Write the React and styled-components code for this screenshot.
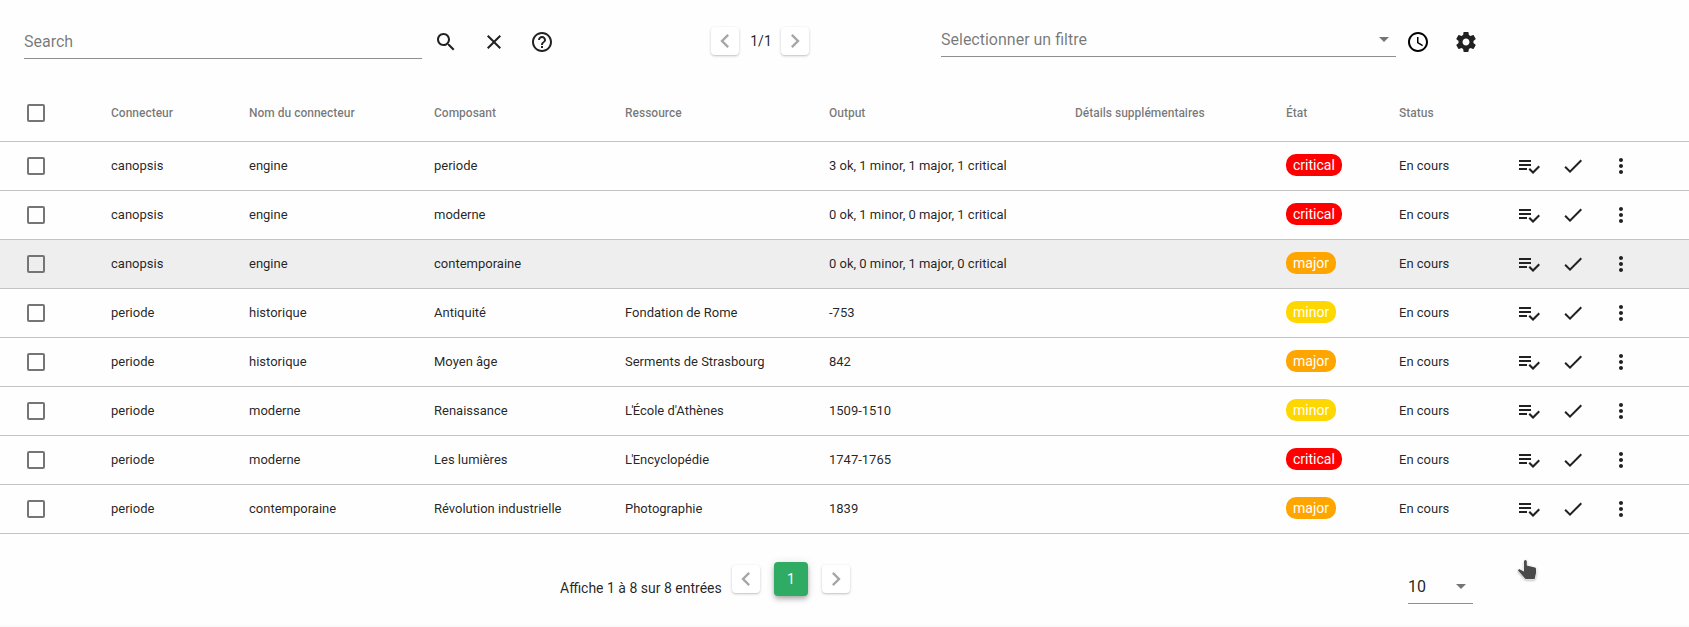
import React from "react";
import styled, { createGlobalStyle } from "styled-components";

const GlobalStyle = createGlobalStyle`
  * { box-sizing: border-box; }
  body {
    margin: 0;
    background: #fafafa;
    color: rgba(0, 0, 0, 0.87);
    font-family: Roboto, sans-serif;
    font-size: 14px;
    line-height: 1.5;
    overflow: hidden;
  }
`;

const Card = styled.main`
  width: 100%;
  height: 625px;
  background: #fefefe;
`;

const Toolbar = styled.header`
  display: flex;
  align-items: flex-start;
  height: 85px;
  padding-left: 24px;
`;

const SearchField = styled.div`
  width: 398px;
  height: 34px;
  margin: 25px 12px 0 0;
  border-bottom: 1px solid #8f8f8f;
  color: rgba(0, 0, 0, 0.54);
  font-size: 16px;
  line-height: 34px;
`;

const IconGroup = styled.div`
  display: flex;
  gap: 24px;
  padding-top: 30px;
`;

const Glyph = styled.svg`
  display: block;
  flex: none;
  width: ${(p) => p.$size || 24}px;
  height: ${(p) => p.$size || 24}px;
  fill: ${(p) => p.$color || "#212121"};
`;

const Pager = styled.nav`
  display: flex;
  align-items: center;
  margin: 27px 0 0 157px;
`;

const PageButton = styled.button`
  display: flex;
  align-items: center;
  justify-content: center;
  width: ${(p) => (p.$active ? 34 : 28)}px;
  height: ${(p) => (p.$active ? 34 : 28)}px;
  padding: 0;
  border: 0;
  border-radius: 4px;
  background: ${(p) => (p.$active ? "#2fab63" : "#fff")};
  color: #fff;
  font: 14px Roboto, sans-serif;
  box-shadow: ${(p) =>
    p.$active
      ? "0 2px 4px -1px rgba(0,0,0,.2), 0 4px 5px 0 rgba(0,0,0,.14), 0 1px 10px 0 rgba(0,0,0,.12)"
      : "0 1px 3px rgba(0,0,0,.2), 0 1px 1px rgba(0,0,0,.06)"};
`;

const PageCount = styled.span`
  width: 42px;
  padding-left: 2px;
  text-align: center;
  line-height: 28px;
`;

const FilterSelect = styled.div`
  display: flex;
  align-items: center;
  justify-content: space-between;
  width: 455px;
  height: 32px;
  margin: 25px 10px 0 132px;
  padding-bottom: 2px;
  border-bottom: 1px solid #8f8f8f;
  color: rgba(0, 0, 0, 0.54);
  font-size: 16px;
`;

const Table = styled.table`
  width: 100%;
  table-layout: fixed;
  border-collapse: separate;
  border-spacing: 0;
`;

const Column = styled.col`
  width: ${(p) => p.$width}px;
`;

const HeadCell = styled.th`
  height: 57px;
  padding: 0;
  border-bottom: 1px solid #c4c4c4;
  color: rgba(0, 0, 0, 0.54);
  font-size: 12px;
  font-weight: 500;
  text-align: left;
  white-space: nowrap;
`;

const Row = styled.tr`
  background: ${(p) => (p.$hovered ? "#eee" : "transparent")};
`;

const Cell = styled.td`
  height: 49px;
  padding: 0;
  border-bottom: 1px solid #c4c4c4;
  font-size: 13px;
  white-space: nowrap;
`;

const Elision = styled.span`
  letter-spacing: -0.8px;
`;

const CheckBox = styled.span`
  display: block;
  width: 18px;
  height: 18px;
  margin-left: 27px;
  border: 2px solid #757575;
  border-radius: 2px;
`;

const stateColors = { critical: "#ff0000", major: "#ffa500", minor: "#ffd700" };

const StateChip = styled.span`
  display: block;
  width: fit-content;
  height: 22px;
  margin-bottom: 2px;
  padding: 0 7px;
  border-radius: 10px;
  background: ${(p) => stateColors[p.$state]};
  color: #fff;
  font-size: 14px;
  line-height: 22px;
`;

const Actions = styled.div`
  display: flex;
  gap: 24px;
`;

const Footer = styled.footer`
  display: flex;
  align-items: flex-start;
  padding: 28px 0 0 560px;
`;

const Summary = styled.span`
  width: 172px;
  margin-top: 16px;
  line-height: 20px;
`;

const FooterPager = styled.nav`
  display: flex;
  align-items: center;
  gap: 14px;
`;

const SizeSelect = styled.div`
  display: flex;
  align-items: center;
  justify-content: space-between;
  width: 65px;
  height: 34px;
  margin: 8px 0 0 558px;
  border-bottom: 1px solid #8f8f8f;
  font-size: 16px;
`;

const Caret = styled.i`
  margin-right: ${(p) => p.$right}px;
  border: 5px solid transparent;
  border-top-color: #757575;
  border-bottom: 0;
`;

const Pointer = styled.svg`
  position: absolute;
  left: 1515px;
  top: 557px;
  width: 25px;
  height: 26px;
  filter: drop-shadow(0 1px 1px rgba(0, 0, 0, 0.3));
`;

const icons = {
  search:
    "M15.5 14h-.79l-.28-.27C15.41 12.59 16 11.11 16 9.5 16 5.91 13.09 3 9.5 3S3 5.91 3 9.5 5.91 16 9.5 16c1.61 0 3.09-.59 4.23-1.57l.27.28v.79l5 4.99L20.49 19l-4.99-5zm-6 0C7.01 14 5 11.99 5 9.5S7.01 5 9.5 5 14 7.01 14 9.5 11.99 14 9.5 14z",
  close:
    "M19 6.41L17.59 5 12 10.59 6.41 5 5 6.41 10.59 12 5 17.59 6.41 19 12 13.41 17.59 19 19 17.59 13.41 12z",
  help: "M11 18h2v-2h-2v2zm1-16C6.48 2 2 6.48 2 12s4.48 10 10 10 10-4.48 10-10S17.52 2 12 2zm0 18c-4.41 0-8-3.59-8-8s3.59-8 8-8 8 3.59 8 8-3.59 8-8 8zm0-14c-2.21 0-4 1.79-4 4h2c0-1.1.9-2 2-2s2 .9 2 2c0 2-3 1.75-3 5h2c0-2.25 3-2.5 3-5 0-2.21-1.79-4-4-4z",
  left: "M15.41 7.41L14 6l-6 6 6 6 1.41-1.41L10.83 12z",
  right: "M10 6L8.59 7.41 13.17 12l-4.58 4.59L10 18l6-6z",
  clock:
    "M11.99 2C6.47 2 2 6.48 2 12s4.47 10 9.99 10C17.52 22 22 17.52 22 12S17.52 2 11.99 2zM12 20c-4.42 0-8-3.58-8-8s3.58-8 8-8 8 3.58 8 8-3.58 8-8 8zm.5-13H11v6l5.25 3.15.75-1.23-4.5-2.67z",
  settings:
    "M19.43 12.98c.04-.32.07-.64.07-.98s-.03-.66-.07-.98l2.11-1.65c.19-.15.24-.42.12-.64l-2-3.46c-.12-.22-.39-.3-.61-.22l-2.49 1c-.52-.4-1.08-.73-1.69-.98l-.38-2.65C14.46 2.18 14.25 2 14 2h-4c-.25 0-.46.18-.49.42l-.38 2.65c-.61.25-1.17.59-1.69.98l-2.49-1c-.23-.09-.49 0-.61.22l-2 3.46c-.13.22-.07.49.12.64l2.11 1.65c-.04.32-.07.65-.07.98s.03.66.07.98l-2.11 1.65c-.19.15-.24.42-.12.64l2 3.46c.12.22.39.3.61.22l2.49-1c.52.4 1.08.73 1.69.98l.38 2.65c.03.24.24.42.49.42h4c.25 0 .46-.18.49-.42l.38-2.65c.61-.25 1.17-.59 1.69-.98l2.49 1c.23.09.49 0 .61-.22l2-3.46c.12-.22.07-.49-.12-.64l-2.11-1.65zM12 15.5c-1.93 0-3.5-1.57-3.5-3.5s1.57-3.5 3.5-3.5 3.5 1.57 3.5 3.5-1.57 3.5-3.5 3.5z",
  playlist:
    "M14 10H2v2h12v-2zm0-4H2v2h12V6zM2 16h8v-2H2v2zm19.5-4.5L23 13l-6.99 7-4.51-4.5L13 14l3.01 3 5.49-5.5z",
  check: "M9 16.17L4.83 12l-1.42 1.41L9 19 21 7l-1.41-1.41z",
  more: "M12 8c1.1 0 2-.9 2-2s-.9-2-2-2-2 .9-2 2 .9 2 2 2zm0 2c-1.1 0-2 .9-2 2s.9 2 2 2 2-.9 2-2-.9-2-2-2zm0 6c-1.1 0-2 .9-2 2s.9 2 2 2 2-.9 2-2-.9-2-2-2z",
};

const Icon = ({ name, color, size }) => (
  <Glyph viewBox="0 0 24 24" $color={color} $size={size}>
    <path d={icons[name]} />
  </Glyph>
);

const Chevron = ({ name }) => <Icon name={name} color="#a6a6a6" size={28} />;

const widths = [111, 138, 185, 191, 204, 246, 211, 113, 118, 44, 128];

const headers = [
  "Connecteur",
  "Nom du connecteur",
  "Composant",
  "Ressource",
  "Output",
  "Détails supplémentaires",
  "État",
  "Status",
];

const alarms = [
  ["canopsis", "engine", "periode", "", "3 ok, 1 minor, 1 major, 1 critical", "critical"],
  ["canopsis", "engine", "moderne", "", "0 ok, 1 minor, 0 major, 1 critical", "critical"],
  ["canopsis", "engine", "contemporaine", "", "0 ok, 0 minor, 1 major, 0 critical", "major"],
  ["periode", "historique", "Antiquité", "Fondation de Rome", "-753", "minor"],
  ["periode", "historique", "Moyen âge", "Serments de Strasbourg", "842", "major"],
  ["periode", "moderne", "Renaissance", <><Elision>L'</Elision>École d'Athènes</>, "1509-1510", "minor"],
  ["periode", "moderne", "Les lumières", <><Elision>L'</Elision>Encyclopédie</>, "1747-1765", "critical"],
  ["periode", "contemporaine", "Révolution industrielle", "Photographie", "1839", "major"],
];

export default function App() {
  return (
    <>
      <GlobalStyle />
      <Card>
        <Toolbar>
          <SearchField>Search</SearchField>
          <IconGroup>
            <Icon name="search" />
            <Icon name="close" />
            <Icon name="help" />
          </IconGroup>
          <Pager>
            <PageButton><Chevron name="left" /></PageButton>
            <PageCount>1/1</PageCount>
            <PageButton><Chevron name="right" /></PageButton>
          </Pager>
          <FilterSelect>
            Selectionner un filtre
            <Caret $right={7} />
          </FilterSelect>
          <IconGroup>
            <Icon name="clock" color="#000" />
            <Icon name="settings" />
          </IconGroup>
        </Toolbar>
        <Table>
          <colgroup>
            {widths.map((w, i) => <Column key={i} $width={w} />)}
          </colgroup>
          <thead>
            <tr>
              <HeadCell><CheckBox /></HeadCell>
              {headers.map((h) => <HeadCell key={h}>{h}</HeadCell>)}
              <HeadCell colSpan={2} />
            </tr>
          </thead>
          <tbody>
            {alarms.map(([connector, name, component, resource, output, state], i) => (
              <Row key={i} $hovered={i === 2}>
                <Cell><CheckBox /></Cell>
                <Cell>{connector}</Cell>
                <Cell>{name}</Cell>
                <Cell>{component}</Cell>
                <Cell>{resource}</Cell>
                <Cell>{output}</Cell>
                <Cell />
                <Cell><StateChip $state={state}>{state}</StateChip></Cell>
                <Cell>En cours</Cell>
                <Cell><Icon name="playlist" /></Cell>
                <Cell>
                  <Actions>
                    <Icon name="check" />
                    <Icon name="more" />
                  </Actions>
                </Cell>
              </Row>
            ))}
          </tbody>
        </Table>
        <Footer>
          <Summary>Affiche 1 à 8 sur 8 entrées</Summary>
          <FooterPager>
            <PageButton><Chevron name="left" /></PageButton>
            <PageButton $active>1</PageButton>
            <PageButton><Chevron name="right" /></PageButton>
          </FooterPager>
          <SizeSelect>
            10
            <Caret $right={7} />
          </SizeSelect>
        </Footer>
      </Card>
      <Pointer viewBox="0 0 25 26">
        <path
          d="M9 4.5Q9 3 10.4 3T11.8 4.5V8.5L20 10.5Q21 10.8 21 12V16L19.7 22H10.5L3 13.5L4 12L9 14.5Z"
          fill="#4a4a4a"
          stroke="#fff"
          strokeWidth="1"
          paintOrder="stroke"
        />
      </Pointer>
    </>
  );
}
